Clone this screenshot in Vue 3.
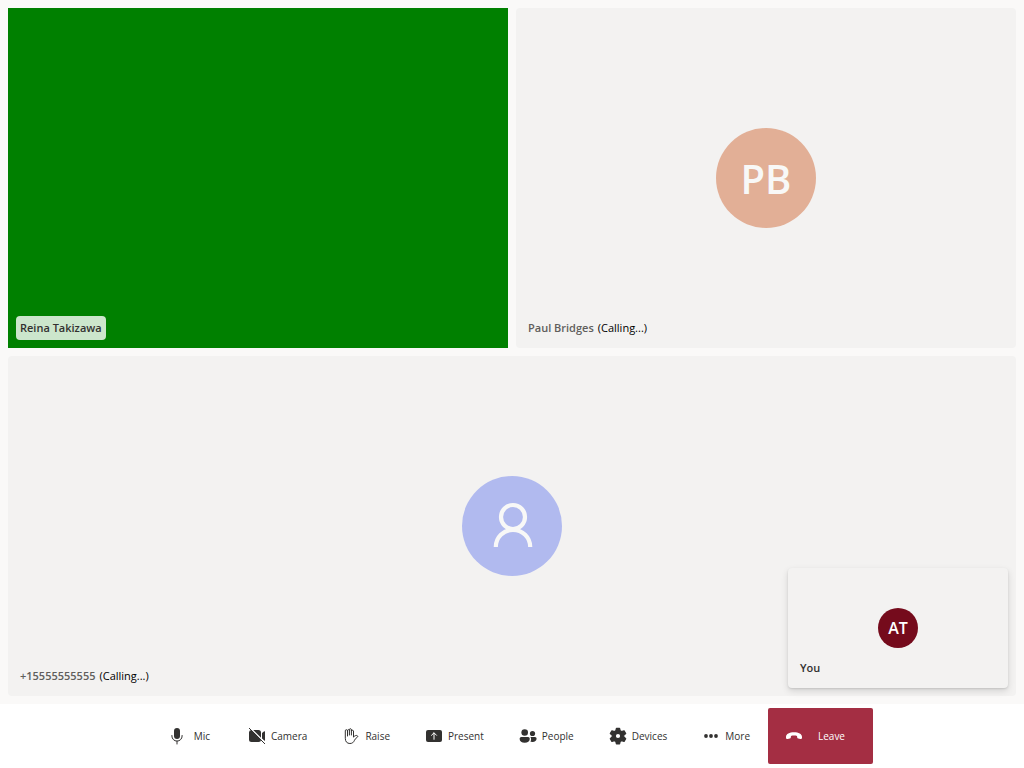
<script setup>
const tiles = [
  { id: 'reina', name: 'Reina Takizawa', video: true },
  { id: 'paul', name: 'Paul Bridges', initials: 'PB', state: '(Calling...)', tone: 'peach' },
  { id: 'phone', name: '+15555555555', state: '(Calling...)', tone: 'lavender', wide: true },
]
const controls = ['Mic', 'Camera', 'Raise', 'Present', 'People', 'Devices', 'More', 'Leave']
</script>

<template>
  <div class="call">
    <main class="gallery">
      <section
        v-for="tile in tiles"
        :key="tile.id"
        class="tile"
        :class="{ video: tile.video, wide: tile.wide }"
      >
        <div v-if="!tile.video" class="avatar" :class="tile.tone">
          <span v-if="tile.initials">{{ tile.initials }}</span>
          <svg v-else viewBox="0 0 100 100" fill="none" stroke="#f8f8f7" stroke-width="4.2" aria-hidden="true">
            <circle cx="51" cy="41" r="12" />
            <path d="M33.8 71a17.2 17.2 0 0 1 34.4 0" />
          </svg>
        </div>
        <div class="label">
          <span class="name">{{ tile.name }}</span>
          <span v-if="tile.state" class="state">{{ tile.state }}</span>
        </div>
      </section>
      <aside class="self">
        <div class="avatar small">AT</div>
        <div class="label"><span>You</span></div>
      </aside>
    </main>

    <nav class="bar" aria-label="Call controls">
      <button
        v-for="item in controls"
        :key="item"
        type="button"
        class="control"
        :class="{ leave: item === 'Leave' }"
      >
        <svg viewBox="0 0 20 20" fill="currentColor" aria-hidden="true">
          <template v-if="item === 'Mic'">
            <rect x="7" y="2" width="6" height="11" rx="3" />
            <path d="M4.9 9.5v.5a5.1 5.1 0 0 0 10.2 0v-.5M10 15.2V18" fill="none" stroke="currentColor" stroke-linecap="round" />
          </template>
          <template v-else-if="item === 'Camera'">
            <path d="M4.3 4h7.2A2.5 2.5 0 0 1 14 6.5v7a2.5 2.5 0 0 1-2.5 2.5h-7A2.5 2.5 0 0 1 2 13.5v-7A2.5 2.5 0 0 1 4.3 4ZM15 7l2.2-1.7c.4-.3.8 0 .8.4v8.6c0 .4-.3.6-.6.5L15 12.5Z" />
            <path d="m3.3 2 15 15" fill="none" stroke="#fff" stroke-width="1.2" />
            <path d="m2.3 2.3 15.4 15.4" fill="none" stroke="currentColor" stroke-linecap="round" />
          </template>
          <path
            v-else-if="item === 'Raise'"
            d="M6.5 10V4.8a1.1 1.1 0 0 0-2.2 0v7.5c0 3.3 1.7 5.2 4.6 5.2 2.3 0 3.6-1 4.6-3.2.6-1.4 1.5-2.3 2.7-3 .6-.3.7-.9.3-1.4-.9-1-2.6-.3-4 1.2V5a1.1 1.1 0 0 0-2.1 0V3.5a1.1 1.1 0 0 0-2.1 0V4A1 1 0 0 0 6.5 4.5M8.4 9V4M10.4 9V4"
            fill="none"
            stroke="currentColor"
            stroke-linecap="round"
            stroke-linejoin="round"
          />
          <template v-else-if="item === 'Present'">
            <rect x="2" y="4" width="16" height="12" rx="2" />
            <path d="M10 13.3V7M7.5 9.3 10 6.8l2.5 2.5" fill="none" stroke="#fff" stroke-linecap="round" stroke-linejoin="round" />
          </template>
          <template v-else-if="item === 'People'">
            <circle cx="6.7" cy="6.5" r="3.3" />
            <path d="M3.3 11h6.8a1.7 1.7 0 0 1 1.7 1.7c0 2.7-2.2 4.1-5.1 4.1s-5.1-1.4-5.1-4.1A1.7 1.7 0 0 1 3.3 11Z" />
            <circle cx="14.5" cy="7.5" r="2.6" />
            <path d="M12.2 11H17a1.6 1.6 0 0 1 1.6 1.6c0 2.3-2 3.6-4.5 3.4-.7 0-1.3-.2-1.8-.4.7-.9.9-1.9.7-3.2-.1-.6-.4-1.1-.8-1.4Z" />
          </template>
          <path
            v-else-if="item === 'Devices'"
            fill-rule="evenodd"
            stroke="currentColor"
            stroke-width="1.2"
            stroke-linejoin="round"
            d="M8.4 2.3h3.2l.6 2.5 1.3.8 2.6-.8 1.6 2.8-2 1.8v1.4l2 1.8-1.6 2.8-2.6-.8-1.3.8-.6 2.5H8.4l-.6-2.5-1.3-.8-2.6.8-1.6-2.8 2-1.8V9.4l-2-1.8 1.6-2.8 2.6.8 1.3-.8ZM10 7.3a2.7 2.7 0 1 0 0 5.4 2.7 2.7 0 0 0 0-5.4Z"
          />
          <template v-else-if="item === 'More'">
            <circle cx="5" cy="10" r="1.9" />
            <circle cx="10" cy="10" r="1.9" />
            <circle cx="15" cy="10" r="1.9" />
          </template>
          <path
            v-else
            d="M2 10.9C2 8 5.5 6.3 10 6.3s8 1.7 8 4.6v.8c0 1-.8 1.5-1.7 1.3l-2-.4c-.7-.2-1-.6-1.1-1.2l-.2-1.5c-1.8-.6-4.2-.6-6 0l-.2 1.5c-.1.6-.4 1-1.1 1.2l-2 .4c-.9.2-1.7-.3-1.7-1.3Z"
          />
        </svg>
        <span>{{ item }}</span>
      </button>
    </nav>
  </div>
</template>

<style>
body {
  margin: 0;
}
</style>

<style scoped>
.call {
  display: flex;
  flex-direction: column;
  min-height: 100vh;
  background: #faf9f8;
  color: #323130;
  font-family: "Segoe UI", "Open Sans", "Noto Sans", sans-serif;
}
.gallery {
  position: relative;
  flex: 1;
  display: grid;
  grid-template-columns: 1fr 1fr;
  grid-template-rows: 1fr 1fr;
  gap: 8px;
  padding: 8px;
}
.tile {
  position: relative;
  display: grid;
  place-items: center;
  border-radius: 4px;
  background: #f3f2f1;
}
.video {
  border-radius: 0;
  background: #008000;
}
.wide {
  grid-column: 1 / -1;
}
.avatar {
  display: grid;
  place-items: center;
  width: 100px;
  height: 100px;
  border-radius: 50%;
  color: #f8f8f7;
  font-size: 40px;
  line-height: 48px;
  font-weight: 600;
}
.avatar span {
  padding-top: 2px;
}
.peach {
  background: #e2af96;
}
.lavender {
  background: #b1baef;
}
.avatar svg {
  width: 100px;
  height: 100px;
}
.small {
  width: 40px;
  height: 40px;
  background: #750b1c;
  color: #fff;
  font-size: 16px;
  line-height: 20px;
}
.label {
  position: absolute;
  left: 8px;
  bottom: 8px;
  display: flex;
  gap: 4px;
  padding: 4px;
  border-radius: 4px;
  font-size: 11px;
  line-height: 16px;
  font-weight: 600;
}
.video .label {
  background: rgba(255, 255, 255, 0.8);
}
.tile:not(.video) .name {
  color: #605e5c;
}
.label .state {
  color: #000;
  font-weight: 400;
}
.self {
  position: absolute;
  right: 16px;
  bottom: 16px;
  display: grid;
  place-items: center;
  width: 220px;
  height: 120px;
  border-radius: 4px;
  background: #f3f2f1;
  box-shadow: 0 3px 7px rgba(0, 0, 0, 0.13), 0 1px 2px rgba(0, 0, 0, 0.11);
}
.bar {
  display: flex;
  justify-content: center;
  padding: 4px;
  background: #fff;
}
.control {
  display: flex;
  align-items: center;
  gap: 4px;
  min-width: 80px;
  height: 56px;
  padding: 0 18px 0 16px;
  border: 0;
  border-radius: 2px;
  background: transparent;
  color: #323130;
  font-family: inherit;
  font-size: 10px;
  line-height: 16px;
}
.control svg {
  flex: none;
  width: 20px;
  height: 20px;
}
.control span {
  flex: 1;
  text-align: center;
}
.leave {
  min-width: 105px;
  background: #a42e43;
  color: #fff;
}
</style>
